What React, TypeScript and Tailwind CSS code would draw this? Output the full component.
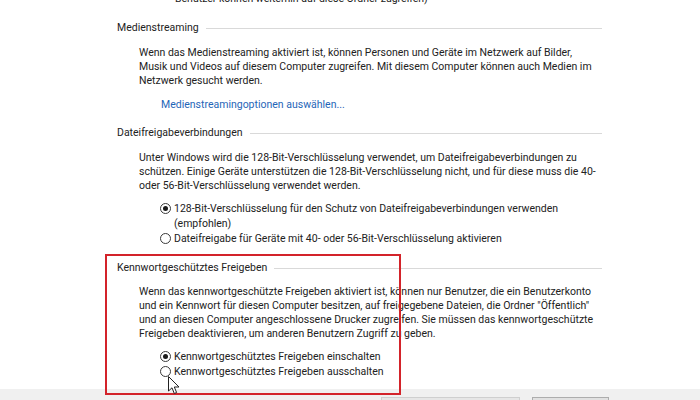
import React from "react";

function Heading({ text }: { text: string }) {
  return (
    <div className="flex items-center h-[16px]">
      <span className="whitespace-nowrap">{text}</span>
      <div className="flex-1 h-px bg-[#d9d9d9] ml-[7px]" />
    </div>
  );
}

function Para({ lines }: { lines: string[] }) {
  return (
    <div className="pl-[22px]">
      {lines.map((l, i) => (
        <div key={i} className="whitespace-nowrap h-[14px] leading-[14px]">
          {l}
        </div>
      ))}
    </div>
  );
}

function Radio({ checked, lines }: { checked: boolean; lines: string[] }) {
  return (
    <div className="flex items-start pl-[43px]">
      <div className="w-[14px] h-[15px] flex items-center">
        <div className="w-[11px] h-[11px] rounded-full border border-[#3a3a3a] bg-white flex items-center justify-center">
          {checked && <div className="w-[5px] h-[5px] rounded-full bg-[#1a1a1a]" />}
        </div>
      </div>
      <div>
        {lines.map((l, i) => (
          <div key={i} className="whitespace-nowrap h-[15px] leading-[15px]">
            {l}
          </div>
        ))}
      </div>
    </div>
  );
}

export default function App() {
  return (
    <div
      className="relative w-[700px] h-[400px] overflow-hidden bg-white text-[#222] text-[10.5px] flex flex-col"
      style={{ fontFamily: "Roboto, 'Noto Sans', sans-serif" }}
    >
      <div className="flex-1 pl-[117px]">
        <div className="w-[485px]">
          <div className="mt-[-9px] pl-[58px] whitespace-nowrap h-[16px] leading-[16px]">
            Benutzer können weiterhin auf diese Ordner zugreifen)
          </div>

          <div className="mt-[13px]">
            <Heading text="Medienstreaming" />
          </div>
          <div className="mt-[10px]">
            <Para
              lines={[
                "Wenn das Medienstreaming aktiviert ist, können Personen und Geräte im Netzwerk auf Bilder,",
                "Musik und Videos auf diesem Computer zugreifen. Mit diesem Computer können auch Medien im",
                "Netzwerk gesucht werden.",
              ]}
            />
          </div>
          <div className="mt-[9px] pl-[44px] h-[16px] leading-[16px] text-[#1f66b8] whitespace-nowrap">
            Medienstreamingoptionen auswählen...
          </div>

          <div className="mt-[12px]">
            <Heading text="Dateifreigabeverbindungen" />
          </div>
          <div className="mt-[10px]">
            <Para
              lines={[
                "Unter Windows wird die 128-Bit-Verschlüsselung verwendet, um Dateifreigabeverbindungen zu",
                "schützen. Einige Geräte unterstützen die 128-Bit-Verschlüsselung nicht, und für diese muss die 40-",
                "oder 56-Bit-Verschlüsselung verwendet werden.",
              ]}
            />
          </div>
          <div className="mt-[7.5px]">
            <Radio
              checked
              lines={[
                "128-Bit-Verschlüsselung für den Schutz von Dateifreigabeverbindungen verwenden",
                "(empfohlen)",
              ]}
            />
            <Radio
              checked={false}
              lines={["Dateifreigabe für Geräte mit 40- oder 56-Bit-Verschlüsselung aktivieren"]}
            />
          </div>

          <div className="mt-[14.5px]">
            <Heading text="Kennwortgeschütztes Freigeben" />
          </div>
          <div className="mt-[9px]">
            <Para
              lines={[
                "Wenn das kennwortgeschützte Freigeben aktiviert ist, können nur Benutzer, die ein Benutzerkonto",
                "und ein Kennwort für diesen Computer besitzen, auf freigegebene Dateien, die Ordner \"Öffentlich\"",
                "und an diesen Computer angeschlossene Drucker zugreifen. Sie müssen das kennwortgeschützte",
                "Freigeben deaktivieren, um anderen Benutzern Zugriff zu geben.",
              ]}
            />
          </div>
          <div className="mt-[7.5px]">
            <Radio checked lines={["Kennwortgeschütztes Freigeben einschalten"]} />
            <Radio checked={false} lines={["Kennwortgeschütztes Freigeben ausschalten"]} />
          </div>
        </div>
      </div>

      <div className="h-[11px] bg-[#f0f0f0] flex items-start pl-[381px] gap-[12px]">
        <div className="mt-[8px] w-[139px] h-[10px] border border-[#cfcfcf] bg-[#e6e6e6]" />
        <div className="mt-[8px] w-[77px] h-[10px] border border-[#adadad] bg-[#e1e1e1]" />
      </div>

      <div className="absolute left-[105px] top-[254px] w-[296px] h-[141px] border-2 border-[#d3232a]" />

      <svg
        className="absolute left-[168px] top-[376px]"
        width="13"
        height="19"
        viewBox="0 0 13 19"
      >
        <path
          d="M0.5 0.5 L0.5 15 L4 11.8 L6.3 17.5 L8.6 16.5 L6.3 11 L11 11 Z"
          fill="#fff"
          stroke="#222"
          strokeWidth="1"
          strokeLinejoin="round"
        />
      </svg>
    </div>
  );
}
